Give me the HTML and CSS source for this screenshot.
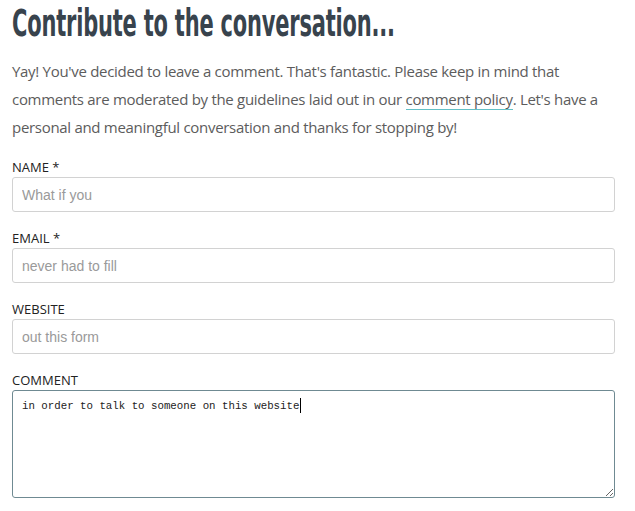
FILE: index.html
```html
<!DOCTYPE html>
<html>
<head>
<meta charset="utf-8">
<title>Leave a comment</title>
<link rel="stylesheet" href="styles.css">
</head>
<body>

<div id="respond">
    <h2 class="reply-title"><span>Contribute to the conversation...</span></h2>

    <p class="intro">Yay! You've decided to leave a comment. That's fantastic. Please keep in mind that<br>
    comments are moderated by the guidelines laid out in our <a href="#">comment policy</a>. Let's have a personal and meaningful conversation and thanks for stopping by!</p>

    <form class="comment-form">
        <div class="field">
            <label for="author">Name *</label>
            <input type="text" id="author" placeholder="What if you">
        </div>
        <div class="field">
            <label for="email">Email *</label>
            <input type="text" id="email" placeholder="never had to fill">
        </div>
        <div class="field">
            <label for="url">Website</label>
            <input type="text" id="url" placeholder="out this form">
        </div>
        <div class="field">
            <label for="comment">Comment</label>
            <div class="textbox">
                <textarea id="comment">in order to talk to someone on this website</textarea>
                <span class="caret"></span>
            </div>
        </div>
    </form>
</div>

</body>
</html>
```

FILE: styles.css
```css
html, body { margin: 0; padding: 0; background-color: #FFF; }
body { font: normal 15px/28px 'Open Sans', sans-serif; color: #5C5C5C; }

#respond { width: 603px; margin: 0 0 0 12px; }

.reply-title { margin: 0; padding-top: 4px; height: 53px; font: bold 37px/40px 'DejaVu Sans Condensed', sans-serif; color: #38434D; white-space: nowrap; }
.reply-title span { display: inline-block; transform: scaleX(0.63); transform-origin: left center; letter-spacing: -0.3px; }

.intro { margin: 0 -20px 17px 0; letter-spacing: -0.3px; }
.intro a { color: inherit; text-decoration: none; border-bottom: 1px solid #62C0C6; }

.field { margin-bottom: 17px; }
.field label { display: block; font: normal 13px/19px 'Open Sans', sans-serif; color: #222; text-transform: uppercase; }

input[type=text] { display: block; box-sizing: border-box; width: 100%; height: 35px; margin: 0; padding: 0 9px; border: 1px solid #D2D2D2; border-radius: 3px; font: normal 14px 'Liberation Sans', Arial, sans-serif; color: #333; background-color: #FFF; outline: none; }
input[type=text]::placeholder { color: #9A9A9A; }

.textbox { position: relative; }
textarea { display: block; box-sizing: border-box; width: 100%; height: 108px; margin: 0; padding: 8px 9px; border: 1px solid #6F8A92; border-radius: 3px; font: normal 10.75px/14px 'Liberation Mono', monospace; color: #222; outline: none; resize: vertical; }
.caret { position: absolute; left: 288px; top: 8px; width: 1px; height: 15px; background-color: #000; }
```
